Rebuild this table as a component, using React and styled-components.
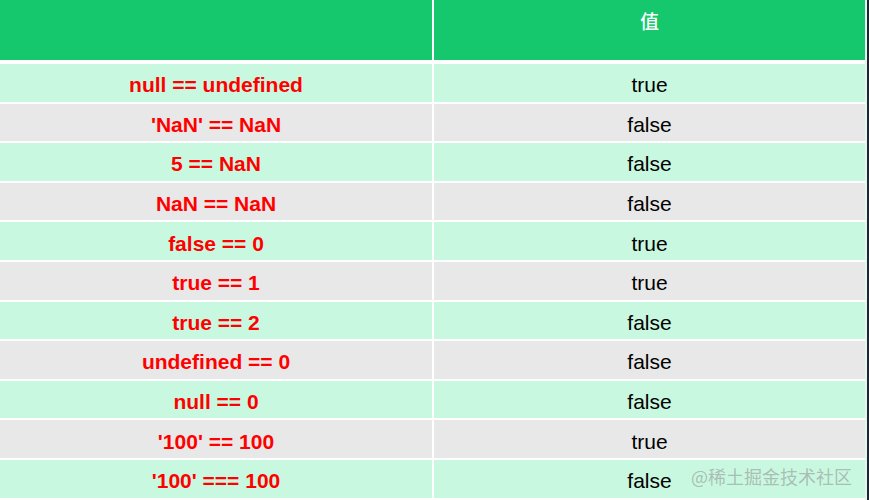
import styled, { createGlobalStyle } from "styled-components";

const GlobalStyle = createGlobalStyle`
  html, body {
    margin: 0;
    padding: 0;
    background: #ffffff;
  }
  body {
    font-family: "Liberation Sans", Arial, sans-serif;
  }
`;

const Page = styled.div`
  width: 869px;
  height: 500px;
  display: flex;
  overflow: hidden;
  position: relative;
  background: #ffffff;
`;

const Table = styled.div`
  width: 865px;
  display: flex;
  flex-direction: column;
`;

const EdgeGap = styled.div`
  width: 2px;
  background: #e4f7ee;
`;

const EdgeStrip = styled.div`
  width: 2px;
  background: #1f2532;
`;

const HeaderRow = styled.div`
  display: grid;
  grid-template-columns: 432px 431px;
  column-gap: 2px;
  height: 60px;
  margin-bottom: 4px;
`;

const HeaderCell = styled.div`
  background: #16c86d;
  color: #ffffff;
  font-family: "Liberation Sans", "Noto Sans CJK SC", sans-serif;
  font-size: 19px;
  font-weight: 500;
  text-align: center;
  padding-top: 7px;
  box-sizing: border-box;
`;

const Body = styled.div`
  display: flex;
  flex-direction: column;
  gap: 2px;
`;

const Row = styled.div`
  display: grid;
  grid-template-columns: 432px 431px;
  column-gap: 2px;
  height: 37.6px;
`;

const Cell = styled.div`
  background: ${(p) => (p.$odd ? "#c9f8e0" : "#e8e8e8")};
  display: flex;
  align-items: center;
  justify-content: center;
  font-size: 21px;
  color: ${(p) => (p.$expr ? "#ff0000" : "#000000")};
  font-weight: ${(p) => (p.$expr ? 700 : 400)};
  padding-top: 5px;
  box-sizing: border-box;
`;

const Watermark = styled.div`
  position: absolute;
  left: 691px;
  top: 463px;
  font-family: "Noto Sans CJK SC", sans-serif;
  font-size: 18px;
  color: rgba(155, 165, 160, 0.7);
  white-space: nowrap;
`;

const rows = [
  ["null == undefined", "true"],
  ["'NaN' == NaN", "false"],
  ["5 == NaN", "false"],
  ["NaN == NaN", "false"],
  ["false == 0", "true"],
  ["true == 1", "true"],
  ["true == 2", "false"],
  ["undefined == 0", "false"],
  ["null == 0", "false"],
  ["'100' == 100", "true"],
  ["'100' === 100", "false"],
];

export default function App() {
  return (
    <>
      <GlobalStyle />
      <Page>
        <Table>
          <HeaderRow>
            <HeaderCell />
            <HeaderCell>值</HeaderCell>
          </HeaderRow>
          <Body>
            {rows.map(([expr, value], i) => (
              <Row key={expr}>
                <Cell $odd={i % 2 === 0} $expr>
                  {expr}
                </Cell>
                <Cell $odd={i % 2 === 0}>{value}</Cell>
              </Row>
            ))}
          </Body>
        </Table>
        <EdgeGap />
        <EdgeStrip />
        <Watermark>@稀土掘金技术社区</Watermark>
      </Page>
    </>
  );
}
